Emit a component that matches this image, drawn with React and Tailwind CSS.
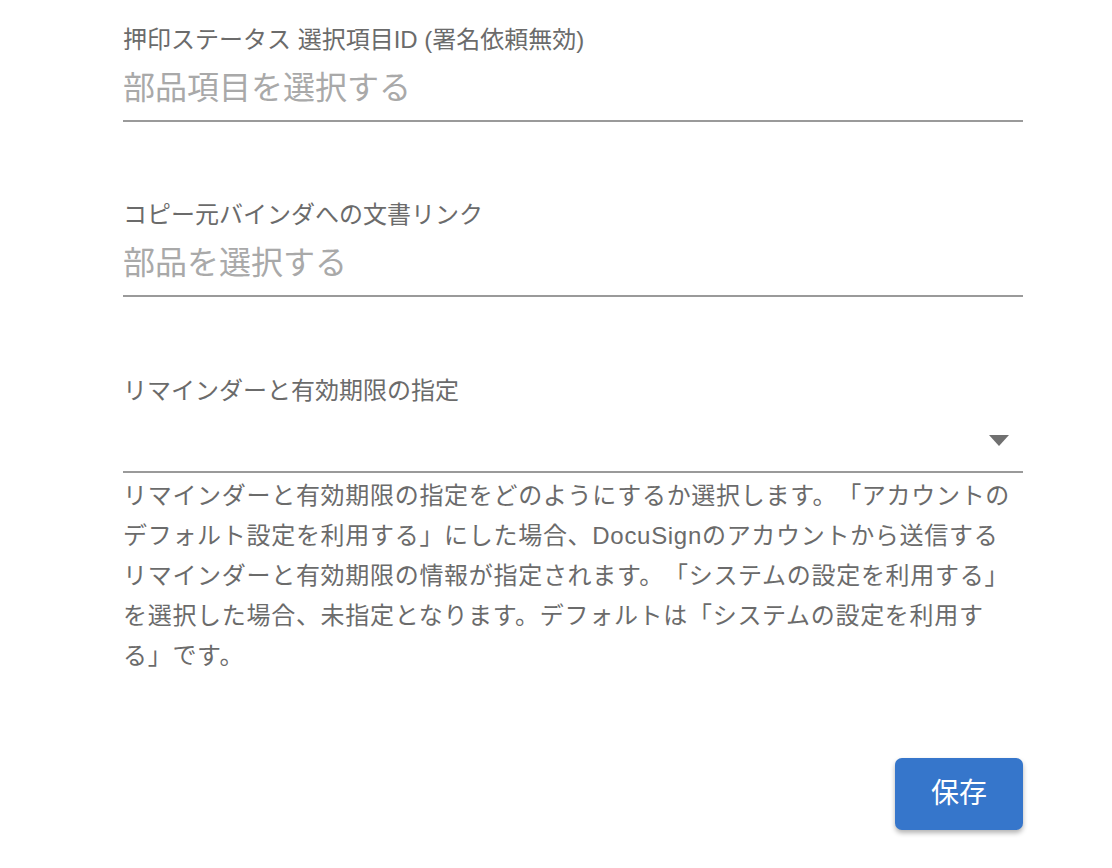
export default function App() {
  return (
    <div className="w-[1112px] min-h-[868px] bg-white font-['Liberation_Sans','Noto_Sans_CJK_JP','Noto_Sans',sans-serif] [text-spacing-trim:space-all]">
      <div className="w-[900px] ml-[123px] pt-[24px] flex flex-col">
        <div className="flex flex-col">
          <div className="text-[24px] leading-[32px] text-[#6b6b6b]">押印ステータス 選択項目ID (署名依頼無効)</div>
          <div className="h-[66px] flex items-center border-b-2 border-[#9a9a9a] text-[32px] text-[#a9a9a9]">部品項目を選択する</div>
        </div>
        <div className="flex flex-col mt-[77px]">
          <div className="text-[24px] leading-[32px] text-[#6b6b6b]">コピー元バインダへの文書リンク</div>
          <div className="h-[66px] flex items-center border-b-2 border-[#9a9a9a] text-[32px] text-[#a9a9a9]">部品を選択する</div>
        </div>
        <div className="flex flex-col mt-[78px]">
          <div className="text-[24px] leading-[32px] text-[#6b6b6b]">リマインダーと有効期限の指定</div>
          <div className="h-[66px] flex items-center justify-end border-b-2 border-[#9a9a9a]">
            <svg width="20" height="11" viewBox="0 0 20 11" className="mr-[14px] mt-[3px]">
              <polygon points="0,0 20,0 10,11" fill="#707070" />
            </svg>
          </div>
          <p className="mt-[3px] text-[24px] leading-[40px] tracking-[0.7px] text-[#6b6b6b] whitespace-nowrap">
            リマインダーと有効期限の指定をどのようにするか選択します。「アカウントの<br />
            デフォルト設定を利用する」にした場合、DocuSignのアカウントから送信する<br />
            リマインダーと有効期限の情報が指定されます。「システムの設定を利用する」<br />
            を選択した場合、未指定となります。デフォルトは「システムの設定を利用す<br />
            る」です。
          </p>
        </div>
        <div className="flex justify-end mt-[82px]">
          <button className="w-[128px] h-[72px] rounded-[7px] bg-[#3676cb] text-white text-[28px] shadow-[0_3px_5px_rgba(0,0,0,0.3)]">保存</button>
        </div>
      </div>
    </div>
  );
}
